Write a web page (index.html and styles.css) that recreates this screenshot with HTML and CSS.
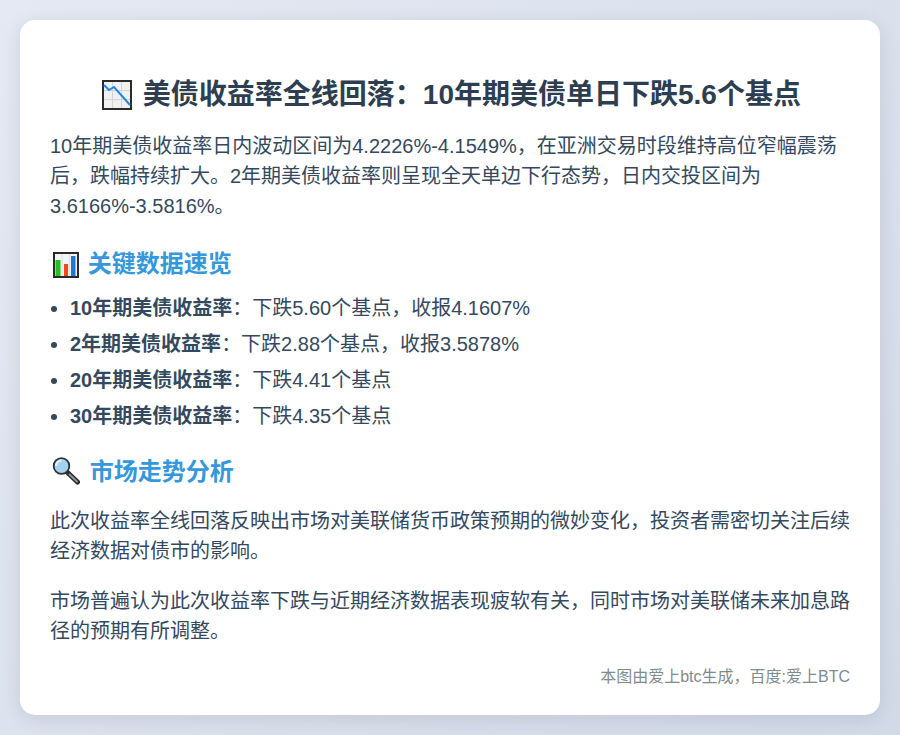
FILE: index.html
```html
<!DOCTYPE html>
<html lang="zh">
<head>
<meta charset="utf-8">
<link rel="stylesheet" href="styles.css">
<title>美债收益率</title>
</head>
<body>
<main class="card">
<h1 class="title"><svg class="icon icon-title" viewBox="0 0 30 30" aria-hidden="true"><rect x="1" y="1" width="28" height="28" fill="#f1f1f1" stroke="#2a2a2a" stroke-width="2"/><path d="M10.500 2v26M19.500 2v26M2 10.500h26M2 19.500h26" stroke="#d4d4d4" stroke-width="1" fill="none"/><path d="M2 5l5 5 5-3 16 18" stroke="#1e88e5" stroke-width="2" fill="none"/></svg> 美债收益率全线回落：10年期美债单日下跌5.6个基点</h1>
<p class="intro">10年期美债收益率日内波动区间为4.2226%-4.1549%，在亚洲交易时段维持高位窄幅震荡后，跌幅持续扩大。2年期美债收益率则呈现全天单边下行态势，日内交投区间为3.6166%-3.5816%。</p>
<h2 class="section"><svg class="icon icon-bars" viewBox="0 0 26 26" aria-hidden="true"><rect x="1" y="1" width="24" height="24" fill="#f4f4f4" stroke="#2a2a2a" stroke-width="2"/><path d="M9 2v22M16.500 2v22" stroke="#dedede" stroke-width="1"/><rect x="2.500" y="8" width="5" height="16" fill="#22c122"/><rect x="11" y="12" width="4" height="12" fill="#f4451e"/><rect x="18" y="4" width="4.500" height="20" fill="#1a78d6"/></svg> 关键数据速览</h2>
<ul class="list">
<li><strong>10年期美债收益率</strong>：下跌5.60个基点，收报4.1607%</li>
<li><strong>2年期美债收益率</strong>：下跌2.88个基点，收报3.5878%</li>
<li><strong>20年期美债收益率</strong>：下跌4.41个基点</li>
<li><strong>30年期美债收益率</strong>：下跌4.35个基点</li>
</ul>
<h2 class="section"><svg class="icon icon-lens" viewBox="0 0 28 28" aria-hidden="true"><path d="M15 15l10.500 10" stroke="#2a2a2a" stroke-width="5" stroke-linecap="round"/><path d="M17.500 17.500l7.500 7" stroke="#8a949c" stroke-width="2" stroke-linecap="round"/><circle cx="9.500" cy="9" r="7.800" fill="#a3d2f0" stroke="#2f3336" stroke-width="1.800"/><path d="M4 9a5.500 5.500 0 0 1 5.500-5.500" stroke="#e6f4fc" stroke-width="2" fill="none"/></svg> 市场走势分析</h2>
<p class="para">此次收益率全线回落反映出市场对美联储货币政策预期的微妙变化，投资者需密切关注后续经济数据对债市的影响。</p>
<p class="para para-last">市场普遍认为此次收益率下跌与近期经济数据表现疲软有关，同时市场对美联储未来加息路径的预期有所调整。</p>
<footer class="note">本图由爱上btc生成，百度:爱上BTC</footer>
</main>
</body>
</html>
```
FILE: styles.css
```css
html, body { margin: 0; height: 100%; }
body {
  box-sizing: border-box;
  padding: 20px;
  height: 735px;
  overflow: hidden;
  background: linear-gradient(135deg, #e4e9f3, #d2dae8);
  font-family: "Liberation Sans", "Noto Sans CJK SC", sans-serif;
  color: #2c3e50;
}
.card {
  box-sizing: border-box;
  height: 695px;
  background: #fff;
  border-radius: 15px;
  box-shadow: 0 4px 20px rgba(0,0,0,.1);
  padding: 30px;
}
.icon { vertical-align: middle; position: relative; }
.icon-title { width: 30px; height: 30px; margin: 0 3px; top: -2px; }
.icon-bars { width: 26px; height: 26px; margin: 0 2px 0 3px; top: -1px; }
.icon-lens { width: 28px; height: 28px; margin: 0 3px 0 2px; top: -3px; }
.title { margin: 24px 0 15px; font-size: 28px; line-height: 42px; text-align: center; color: #2c3e50; font-weight: 700; }
.intro { margin: 0; font-size: 20px; line-height: 30px; color: #34495e; }
.section { margin: 25px 0 11px; font-size: 24px; line-height: 36px; color: #3498db; font-weight: 700; }
.list { margin: 0; padding-left: 20px; font-size: 20px; line-height: 30px; color: #34495e; }
.list li { margin-bottom: 6px; }
.list + .section { margin-top: 23px; margin-bottom: 16px; }
.para { margin: 0 0 20px; font-size: 20px; line-height: 30px; color: #34495e; }
.para-last { margin-bottom: 19px; }
.note { text-align: right; font-size: 16px; line-height: 24px; color: #7f8c8d; }
```
